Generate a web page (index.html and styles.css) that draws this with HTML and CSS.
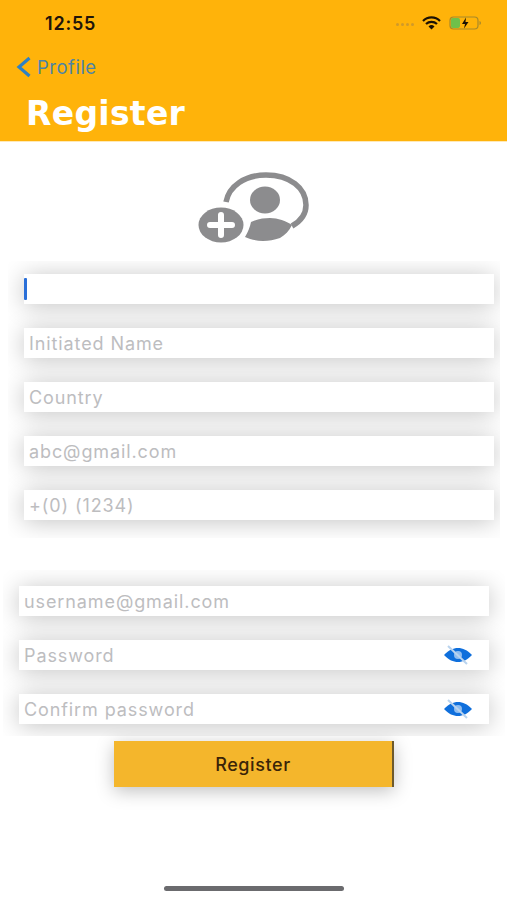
FILE: index.html
```html
<!DOCTYPE html>
<html lang="en">
<head>
    <meta charset="UTF-8">
    <meta name="viewport" content="width=device-width, initial-scale=1.0">
    <title>Register</title>
    <link rel="stylesheet" href="styles.css">
</head>
<body>
    <header class="top">
        <div class="status">
            <span class="time">12:55</span>
            <div class="status-icons">
                <span class="signal"><i></i><i></i><i></i><i></i></span>
                <svg class="wifi" width="19" height="14" viewBox="0 0 19 14">
                    <path d="M1 5a12 12 0 0 1 17 0" fill="none" stroke="#1d1204" stroke-width="2.2"/>
                    <path d="M4 8a8 8 0 0 1 11 0" fill="none" stroke="#1d1204" stroke-width="2.2"/>
                    <path d="M6.5 10.4a4.4 4.4 0 0 1 6 0L9.500 13.500z" fill="#1d1204"/>
                </svg>
                <svg class="battery" width="33" height="14" viewBox="0 0 33 14">
                    <rect x="1" y="1" width="28" height="12" rx="3.500" fill="none" stroke="#a8892a" stroke-width="1.200"/>
                    <rect x="2" y="2" width="9" height="10" rx="2" fill="#6fc04a"/>
                    <path d="M30.500 5v4a2 2 0 0 0 1.500-2 2 2 0 0 0-1.500-2z" fill="#a8892a"/>
                    <path d="M17 1.500l-4 6.500h3l-1 4.500 4.500-6.500h-3z" fill="#1d1204"/>
                </svg>
            </div>
        </div>
        <div class="back">
            <svg width="16" height="22" viewBox="0 0 16 22">
                <path d="M13.500 2L3 11l10.500 9" fill="none" stroke="#2f81c4" stroke-width="3.200"/>
            </svg>
            <span>Profile</span>
        </div>
        <h1>Register</h1>
    </header>

    <main class="page">
        <div class="avatar">
            <svg width="114" height="74" viewBox="0 0 114 74">
                <path d="M28 30C31 14 47 3 68 3c24 0 40 13 40 30 0 9-5 16-14 21" fill="none" stroke="#8c8c8e" stroke-width="5.500"/>
                <ellipse cx="67" cy="28" rx="15" ry="13.500" fill="#8c8c8e"/>
                <path d="M47 65c3-5 5-10 6-15 6-3 13-4 19-4 8 0 16 3 22 7-3 6-7 10-12 13-6 2-11 3-17 3-7 0-13-2-18-4z" fill="#8c8c8e"/>
                <ellipse cx="23" cy="53" rx="22.500" ry="17.500" fill="#8c8c8e"/>
                <path d="M23 43v20M12 53h22" stroke="#fff" stroke-width="6" stroke-linecap="round"/>
            </svg>
        </div>

        <section class="group group-profile">
            <div class="field"><span class="caret"></span></div>
            <div class="field"><span>Initiated Name</span></div>
            <div class="field"><span>Country</span></div>
            <div class="field"><span>abc@gmail.com</span></div>
            <div class="field"><span>+(0) (1234)</span></div>
        </section>

        <section class="group group-login">
            <div class="field"><span>username@gmail.com</span></div>
            <div class="field">
                <span>Password</span>
                <svg class="eye" width="30" height="20" viewBox="0 0 30 20">
                    <path d="M1 10C6 5 10 3 15 3s9 2 14 7c-5 5-9 7-14 7s-9-2-14-7z" fill="#0f6fdc"/>
                    <circle cx="15" cy="10" r="4" fill="#8fbdf0"/>
                    <path d="M5 1l19 18" stroke="#b9d3ee" stroke-width="2"/>
                </svg>
            </div>
            <div class="field">
                <span>Confirm password</span>
                <svg class="eye" width="30" height="20" viewBox="0 0 30 20">
                    <path d="M1 10C6 5 10 3 15 3s9 2 14 7c-5 5-9 7-14 7s-9-2-14-7z" fill="#0f6fdc"/>
                    <circle cx="15" cy="10" r="4" fill="#8fbdf0"/>
                    <path d="M5 1l19 18" stroke="#b9d3ee" stroke-width="2"/>
                </svg>
            </div>
        </section>

        <button class="submit">Register</button>

        <div class="home-bar"></div>
    </main>
</body>
</html>
```

FILE: styles.css
```css
html, body {
    margin: 0;
    padding: 0;
}
body {
    width: 507px;
    height: 900px;
    overflow: hidden;
    background: #fff;
    font-family: Inter, "Liberation Sans", sans-serif;
    display: flex;
    flex-direction: column;
}
.top {
    background: #ffb30a;
    height: 141px;
    flex: none;
    border-bottom: 1px solid #ffe9b8;
    box-sizing: content-box;
}
.status {
    display: flex;
    justify-content: space-between;
    align-items: center;
    height: 24px;
    padding: 11px 25px 0 45px;
}
.time {
    font-size: 18px;
    font-weight: 600;
    color: #20140a;
    letter-spacing: 0.8px;
}
.status-icons {
    display: flex;
    align-items: center;
}
.signal {
    display: flex;
    gap: 2px;
    margin-right: 8px;
    margin-top: 2px;
}
.signal i {
    width: 3px;
    height: 3px;
    border-radius: 50%;
    background: #d09a2a;
}
.wifi {
    margin-right: 8px;
}
.back {
    display: flex;
    align-items: center;
    gap: 5px;
    margin-top: 21px;
    padding-left: 16px;
    height: 22px;
    font-size: 18.500px;
    letter-spacing: 0.5px;
    color: #4d84a6;
}
.top h1 {
    margin: 17px 0 0 26px;
    font-family: "DejaVu Sans", sans-serif;
    font-size: 33px;
    line-height: 38px;
    font-weight: 700;
    letter-spacing: 0.3px;
    color: #fff;
}
.page {
    flex: 1;
    display: flex;
    flex-direction: column;
    min-height: 0;
}
.avatar {
    display: flex;
    justify-content: center;
    padding: 30px 0 0 3px;
    height: 74px;
}
.avatar svg {
    display: block;
}
.group {
    overflow: hidden;
    display: flex;
    flex-direction: column;
    gap: 24px;
}
.group-profile {
    margin: 15px 7px 0 8px;
    padding: 13px 6px 18px 16px;
}
.group-login {
    margin: 32px 2px 0 3px;
    padding: 16px 16px 12px 16px;
}
.field {
    height: 30px;
    background: #fff;
    box-shadow: 0 2px 24px rgba(0, 0, 0, 0.24);
    display: flex;
    align-items: center;
    justify-content: space-between;
    padding: 0 16px 0 5px;
    font-size: 18px;
    letter-spacing: 0.9px;
    color: #bdbdbf;
    white-space: nowrap;
}
.caret {
    width: 2.500px;
    height: 22px;
    background: #2a6fd8;
    border-radius: 1px;
    margin-left: -5px;
}
.eye {
    display: block;
}
.submit {
    display: block;
    width: 280px;
    height: 46px;
    margin: 5px 0 0 114px;
    padding: 0;
    border: 0;
    border-right: 2px solid #6e5a2c;
    background: #f4b62c;
    box-shadow: 0 4px 18px rgba(0, 0, 0, 0.25);
    font-family: inherit;
    font-size: 18px;
    font-weight: 500;
    letter-spacing: 0.6px;
    color: #3a2408;
}
.home-bar {
    width: 180px;
    height: 5px;
    border-radius: 3px;
    background: #6b6b6e;
    margin: auto 0 9px 164px;
}
```
